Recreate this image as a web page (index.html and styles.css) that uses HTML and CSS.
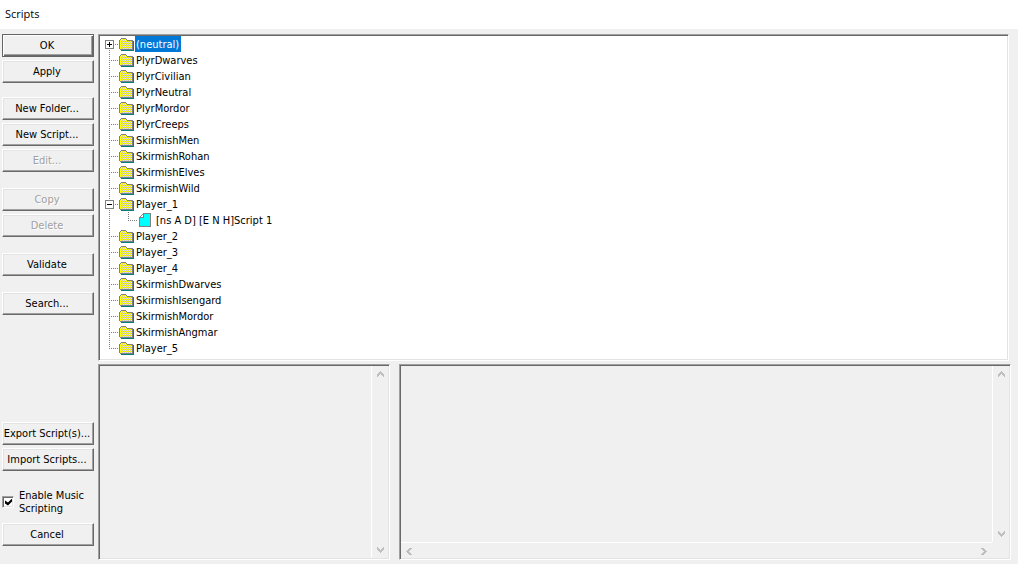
FILE: index.html
```
<!DOCTYPE html>
<html lang="en">
<head>
<meta charset="utf-8">
<title>Scripts</title>
<link rel="stylesheet" href="styles.css">
</head>
<body>
<svg class="defs" aria-hidden="true">
  <defs>
    <symbol id="folder" viewBox="0 0 16 16">
      <path d="M2 15h13V5h-1v9H2z" fill="#008080"/>
      <path d="M0 4h1V3h1V2h5v1h1v1h6v10H1v-1H0z" fill="#808080"/>
      <path d="M1 4h1V3h5v1h1v1h5v8H1z" fill="#ffff00"/>
      <path d="M3 4.500h4M2 5.500h11M3 6.500h10M2 7.500h11M3 8.500h10M2 9.500h11M3 10.500h10M2 11.500h11M3 12.500h10" stroke="#c8c8c8" stroke-dasharray="1 1"/>
    </symbol>
    <symbol id="file" viewBox="0 0 16 16">
      <path d="M7 1h8v14H3V5h1V4h1V3h1V2h1z" fill="#808080"/>
      <path d="M8 2h6v12H4V6h4z" fill="#00ffff"/>
      <path d="M4 5h1V4h1V3h1v2z" fill="#fff"/>
    </symbol>
    <symbol id="up" viewBox="0 0 7 6"><path d="M3 0h1v1h1v1h1v1h1v3h-1V5H5V4H4V3H3v1H2v1H1v1H0V3h1V2h1V1h1z" fill="#bfbfbf"/></symbol>
    <symbol id="left" viewBox="0 0 6 7"><path d="M0 3h1V2h1V1h1V0h3v1H5v1H4v1H3v1h1v1h1v1h1v1H3V6H2V5H1V4H0z" fill="#bfbfbf"/></symbol>
  </defs>
</svg>
<header class="titlebar">Scripts</header>
<main class="dialog">
  <aside class="sidebar">
    <div class="group first">
      <button class="btn default">OK</button>
      <button class="btn">Apply</button>
    </div>
    <div class="group">
      <button class="btn">New Folder...</button>
      <button class="btn">New Script...</button>
      <button class="btn" disabled>Edit...</button>
    </div>
    <div class="group">
      <button class="btn" disabled>Copy</button>
      <button class="btn" disabled>Delete</button>
    </div>
    <div class="group"><button class="btn">Validate</button></div>
    <div class="group"><button class="btn">Search...</button></div>
    <div class="group bottom">
      <button class="btn">Export Script(s)...</button>
      <button class="btn">Import Scripts...</button>
    </div>
    <label class="check"><input type="checkbox" checked><span>Enable Music Scripting</span></label>
    <button class="btn cancel">Cancel</button>
  </aside>
  <section class="content">
    <ul class="tree sunken">
      <li class="node"><button class="toggle plus" aria-label="Expand"></button><svg class="icon"><use href="#folder"/></svg><span class="name selected">(neutral)</span></li>
      <li class="node"><svg class="icon"><use href="#folder"/></svg><span class="name">PlyrDwarves</span></li>
      <li class="node"><svg class="icon"><use href="#folder"/></svg><span class="name">PlyrCivilian</span></li>
      <li class="node"><svg class="icon"><use href="#folder"/></svg><span class="name">PlyrNeutral</span></li>
      <li class="node"><svg class="icon"><use href="#folder"/></svg><span class="name">PlyrMordor</span></li>
      <li class="node"><svg class="icon"><use href="#folder"/></svg><span class="name">PlyrCreeps</span></li>
      <li class="node"><svg class="icon"><use href="#folder"/></svg><span class="name">SkirmishMen</span></li>
      <li class="node"><svg class="icon"><use href="#folder"/></svg><span class="name">SkirmishRohan</span></li>
      <li class="node"><svg class="icon"><use href="#folder"/></svg><span class="name">SkirmishElves</span></li>
      <li class="node"><svg class="icon"><use href="#folder"/></svg><span class="name">SkirmishWild</span></li>
      <li class="node"><button class="toggle" aria-label="Collapse"></button><svg class="icon"><use href="#folder"/></svg><span class="name">Player_1</span></li>
      <li class="node child"><svg class="icon"><use href="#file"/></svg><span class="name">[ns A D] [E N H]Script 1</span></li>
      <li class="node"><svg class="icon"><use href="#folder"/></svg><span class="name">Player_2</span></li>
      <li class="node"><svg class="icon"><use href="#folder"/></svg><span class="name">Player_3</span></li>
      <li class="node"><svg class="icon"><use href="#folder"/></svg><span class="name">Player_4</span></li>
      <li class="node"><svg class="icon"><use href="#folder"/></svg><span class="name">SkirmishDwarves</span></li>
      <li class="node"><svg class="icon"><use href="#folder"/></svg><span class="name">SkirmishIsengard</span></li>
      <li class="node"><svg class="icon"><use href="#folder"/></svg><span class="name">SkirmishMordor</span></li>
      <li class="node"><svg class="icon"><use href="#folder"/></svg><span class="name">SkirmishAngmar</span></li>
      <li class="node"><svg class="icon"><use href="#folder"/></svg><span class="name">Player_5</span></li>
    </ul>
    <div class="panes">
      <div class="pane sunken">
        <div class="view"></div>
        <div class="vbar">
          <button class="arrow" aria-label="Scroll up" disabled><svg class="v"><use href="#up"/></svg></button>
          <button class="arrow" aria-label="Scroll down" disabled><svg class="v flip"><use href="#up"/></svg></button>
        </div>
      </div>
      <div class="pane both sunken">
        <div class="view"></div>
        <div class="vbar">
          <button class="arrow" aria-label="Scroll up" disabled><svg class="v"><use href="#up"/></svg></button>
          <button class="arrow" aria-label="Scroll down" disabled><svg class="v flip"><use href="#up"/></svg></button>
        </div>
        <div class="hbar">
          <button class="arrow" aria-label="Scroll left" disabled><svg class="h"><use href="#left"/></svg></button>
          <button class="arrow" aria-label="Scroll right" disabled><svg class="h flip"><use href="#left"/></svg></button>
        </div>
      </div>
    </div>
  </section>
</main>
</body>
</html>
```
FILE: styles.css
```
* { box-sizing: border-box; }
body {
  margin: 0;
  min-height: 100vh;
  display: flex;
  flex-direction: column;
  background: #fff;
  color: #000;
  font: 11px/13px Tahoma, "DejaVu Sans Condensed", sans-serif;
}
button, input { font: inherit; color: inherit; margin: 0; padding: 0; }
.defs { position: absolute; width: 0; height: 0; }
.titlebar { height: 29px; padding: 6px 5px; font: 11px/16px "Open Sans", sans-serif; }
.dialog {
  flex: 1;
  display: grid;
  grid-template-columns: 92px 1fr;
  gap: 4px;
  padding: 5px 7px 4px 2px;
  background: #f0f0f0;
}
.sidebar { display: flex; flex-direction: column; gap: 16px; padding-bottom: 14px; }
.group { display: flex; flex-direction: column; gap: 3px; }
.first { margin-bottom: -2px; }
.bottom { margin-top: auto; margin-bottom: 1px; }
.btn {
  height: 23px;
  padding: 0 2px 0 0;
  border: 1px solid;
  border-color: #fff #696969 #696969 #fff;
  box-shadow: inset -1px -1px #a0a0a0, inset 1px 1px #e3e3e3;
  background: #f0f0f0;
  white-space: nowrap;
}
.default {
  border-color: #646464;
  box-shadow: inset 1px 1px #fff, inset -1px -1px #696969, inset -2px -2px #a0a0a0;
}
.btn:disabled { color: #a0a0a0; text-shadow: 1px 1px #fff; }
.check { display: flex; align-items: center; gap: 5px; }
.check input {
  appearance: none;
  flex: none;
  width: 12px;
  height: 12px;
  border: 1px solid;
  border-color: #a0a0a0 #fff #fff #a0a0a0;
  box-shadow: inset 1px 1px #696969, inset -1px -1px #e3e3e3;
  background: #fff;
}
.check input:checked::before {
  content: "";
  display: block;
  width: 7px;
  height: 7px;
  margin: 2px;
  background: #000;
  clip-path: polygon(0 29%, 43% 57%, 100% 0, 100% 43%, 43% 100%, 0 71%);
}
.check span { padding-top: 1px; }
.cancel { margin-top: -8px; }
.content { display: grid; grid-template-rows: auto 1fr; gap: 3px; min-width: 0; }
.sunken {
  border: 1px solid;
  border-color: #a0a0a0 #fff #fff #a0a0a0;
  box-shadow: inset 1px 1px #696969, inset -1px -1px #e3e3e3;
  padding: 1px;
}
.tree { list-style: none; margin: 0 2px 0 0; padding-bottom: 4px; background: #fff; }
.node {
  position: relative;
  display: flex;
  align-items: center;
  height: 16px;
  padding-left: 19px;
  line-height: 14px;
}
.node::before {
  content: "";
  position: absolute;
  left: 9px;
  top: 0;
  width: 1px;
  height: 16px;
  background: repeating-linear-gradient(#808080 0 1px, transparent 1px 2px);
}
.node:first-child::before { top: 8px; height: 8px; }
.node:last-child::before { height: 8px; }
.node::after {
  content: "";
  position: absolute;
  left: 9px;
  top: 8px;
  width: 10px;
  height: 1px;
  background: repeating-linear-gradient(90deg, #808080 0 1px, transparent 1px 2px);
}
.child { padding-left: 36px; }
.child::after {
  left: 28px;
  top: 0;
  height: 9px;
  background:
    repeating-linear-gradient(90deg, #808080 0 1px, transparent 1px 2px) 0 8px / 10px 1px no-repeat,
    repeating-linear-gradient(#808080 0 1px, transparent 1px 2px) 0 0 / 1px 9px no-repeat;
}
.toggle {
  position: absolute;
  z-index: 1;
  left: 5px;
  top: 4px;
  width: 9px;
  height: 9px;
  border: 1px solid #808080;
  background: linear-gradient(#000, #000) center / 5px 1px no-repeat #fff;
}
.plus {
  background:
    linear-gradient(#000, #000) center / 5px 1px no-repeat,
    linear-gradient(#000, #000) center / 1px 5px no-repeat #fff;
}
.icon { flex: none; width: 16px; height: 16px; }
.name { padding: 2px 2px 0 1px; white-space: pre; }
.child .name { padding-left: 4px; }
.selected { background: #0078d7; color: #fff; }
.panes { display: grid; grid-template-columns: 292fr 612fr; gap: 9px; }
.pane { display: grid; grid-template-columns: 1fr 17px; padding: 1px; }
.both { grid-template-rows: 1fr 16px; }
.vbar, .hbar { display: flex; justify-content: space-between; }
.vbar { flex-direction: column; border-left: 1px solid #fff; }
.hbar { border-top: 1px solid #fff; }
.arrow { display: grid; place-items: center; width: 16px; height: 16px; border: 0; background: none; }
.v { width: 7px; height: 6px; }
.h { width: 6px; height: 7px; }
.flip { transform: rotate(180deg); }
```
